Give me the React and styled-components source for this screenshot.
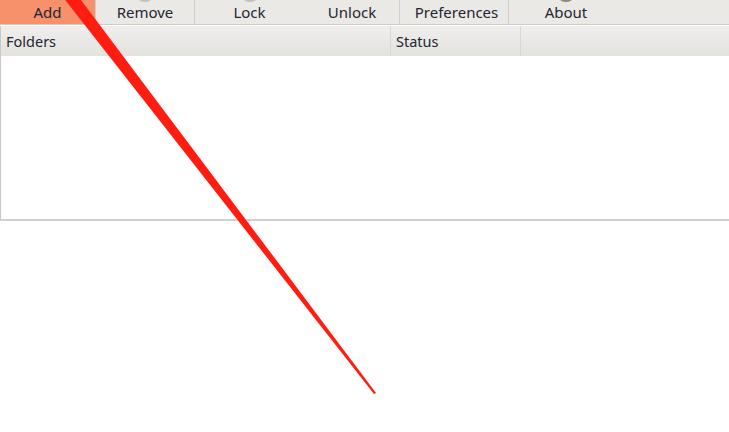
import React from "react";
import styled, { createGlobalStyle } from "styled-components";

const Global = createGlobalStyle`
  html, body { margin: 0; padding: 0; background: #ffffff; }
  body { width: 729px; height: 432px; overflow: hidden; font-family: "Noto Sans", "Open Sans", sans-serif; }
`;

const Page = styled.div`
  position: relative;
  width: 729px;
  height: 432px;
  display: flex;
  flex-direction: column;
`;

const Toolbar = styled.div`
  display: flex;
  height: 24px;
  background: #ebe9e5;
  border-bottom: 1px solid #cfccc7;
`;

const ToolButton = styled.div`
  position: relative;
  width: ${(p) => p.$w}px;
  display: flex;
  align-items: flex-end;
  justify-content: center;
  padding-bottom: 2px;
  padding-left: ${(p) => p.$pl || 0}px;
  box-sizing: border-box;
  background: ${(p) => (p.$active ? "#f6916c" : "transparent")};
  border-right: ${(p) => (p.$sep ? "1px solid #d2cfca" : "1px solid transparent")};
  font-size: 15px;
  line-height: 20px;
  color: #232533;
`;

const IconStub = styled.span`
  position: absolute;
  top: -7px;
  left: 50%;
  transform: translateX(-50%);
  width: 14px;
  height: 9px;
  border-radius: 50%;
  background: ${(p) => p.$c || "#c4c1bc"};
`;

const Table = styled.div`
  display: flex;
  flex-direction: column;
  height: 193px;
  border-left: 1px solid #cbc8c3;
  border-bottom: 2px solid #d3d0cb;
  margin-top: 1px;
`;

const Header = styled.div`
  display: flex;
  height: 30px;
  background: linear-gradient(#efeeec, #e3e2df);
`;

const HeaderCell = styled.div`
  width: ${(p) => (p.$w ? `${p.$w}px` : "auto")};
  flex: ${(p) => (p.$w ? "none" : "1")};
  display: flex;
  align-items: center;
  padding-left: 5px;
  box-sizing: border-box;
  border-right: ${(p) => (p.$last ? "none" : "1px solid #d9d7d3")};
  font-size: 14.5px;
  color: #232533;
`;

const Body = styled.div`
  flex: 1;
  background: #ffffff;
`;

const ArrowSvg = styled.svg`
  position: absolute;
  left: 0;
  top: 0;
  pointer-events: none;
`;

const buttons = [
  { label: "Add", w: 96, active: true, sep: true },
  { label: "Remove", w: 99, sep: true, icon: true },
  { label: "Lock", w: 110, icon: true },
  { label: "Unlock", w: 95, sep: true },
  { label: "Preferences", w: 109, sep: true, pl: 5 },
  { label: "About", w: 115, icon: "#8e8b87" },
];

export default function App() {
  return (
    <Page>
      <Global />
      <Toolbar>
        {buttons.map((b) => (
          <ToolButton key={b.label} $w={b.w} $active={b.active} $sep={b.sep} $pl={b.pl}>
            {b.icon && <IconStub $c={typeof b.icon === "string" ? b.icon : undefined} />}
            {b.label}
          </ToolButton>
        ))}
      </Toolbar>
      <Table>
        <Header>
          <HeaderCell $w={390}>Folders</HeaderCell>
          <HeaderCell $w={130}>Status</HeaderCell>
          <HeaderCell $last />
        </Header>
        <Body />
      </Table>
      <ArrowSvg width="729" height="432" viewBox="0 0 729 432">
        <polygon points="374,394 376,393 78,-4 62,-4" fill="#ff1d12" />
      </ArrowSvg>
    </Page>
  );
}
